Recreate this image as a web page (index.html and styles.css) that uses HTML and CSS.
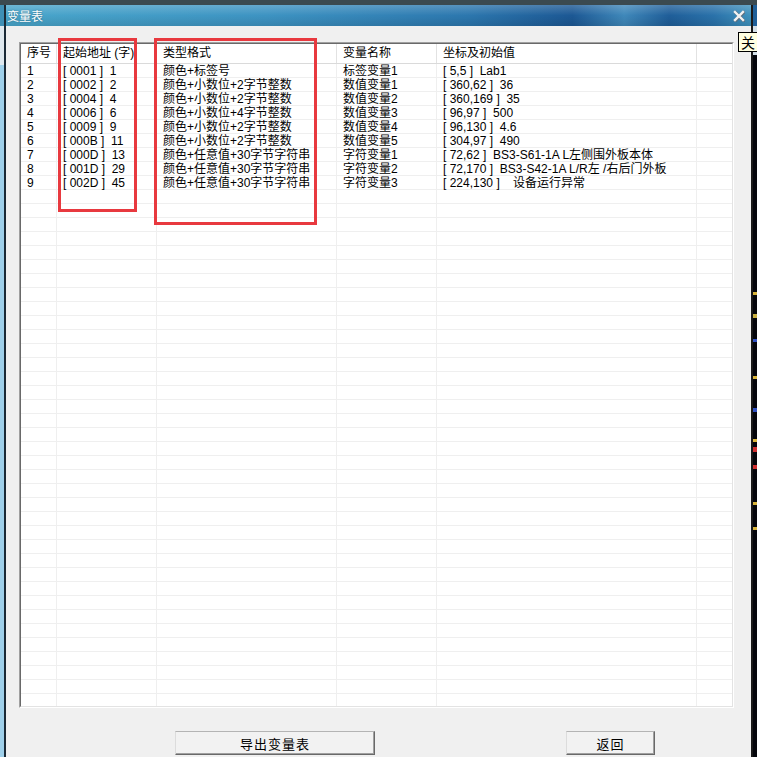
FILE: index.html
```html
<!DOCTYPE html>
<html lang="zh-CN">
<head>
  <meta charset="UTF-8" />
  <title>变量表</title>
  <link rel="stylesheet" href="styles.css">
</head>
<body>
  <div class="desk">
    <div class="side-left"></div>

    <div class="window">
      <div class="titlebar">
        <span class="title">变量表</span>
        <span class="close">
          <svg width="12" height="12" viewBox="0 0 12 12">
            <path d="M2 2 L10 10 M10 2 L2 10" stroke="#5a6f80" stroke-width="3.2" stroke-linecap="square" transform="translate(0.6,0.6)"/>
            <path d="M2 2 L10 10 M10 2 L2 10" stroke="#f2f2f2" stroke-width="2.4" stroke-linecap="square"/>
          </svg>
        </span>
      </div>

      <div class="client">
        <div class="list">
          <div class="grid">
            <div class="head">
              <div>序号</div>
              <div>起始地址 (字)</div>
              <div>类型格式</div>
              <div>变量名称</div>
              <div>坐标及初始值</div>
              <div></div>
            </div>
            <div class="rows">
              <div class="row"><span>1</span><span>[ 0001 ]  1</span><span>颜色+标签号</span><span>标签变量1</span><span>[ 5,5 ]  Lab1</span></div>
              <div class="row"><span>2</span><span>[ 0002 ]  2</span><span>颜色+小数位+2字节整数</span><span>数值变量1</span><span>[ 360,62 ]  36</span></div>
              <div class="row"><span>3</span><span>[ 0004 ]  4</span><span>颜色+小数位+2字节整数</span><span>数值变量2</span><span>[ 360,169 ]  35</span></div>
              <div class="row"><span>4</span><span>[ 0006 ]  6</span><span>颜色+小数位+4字节整数</span><span>数值变量3</span><span>[ 96,97 ]  500</span></div>
              <div class="row"><span>5</span><span>[ 0009 ]  9</span><span>颜色+小数位+2字节整数</span><span>数值变量4</span><span>[ 96,130 ]  4.6</span></div>
              <div class="row"><span>6</span><span>[ 000B ]  11</span><span>颜色+小数位+2字节整数</span><span>数值变量5</span><span>[ 304,97 ]  490</span></div>
              <div class="row"><span>7</span><span>[ 000D ]  13</span><span>颜色+任意值+30字节字符串</span><span>字符变量1</span><span>[ 72,62 ]  BS3-S61-1A L左侧围外板本体</span></div>
              <div class="row"><span>8</span><span>[ 001D ]  29</span><span>颜色+任意值+30字节字符串</span><span>字符变量2</span><span>[ 72,170 ]  BS3-S42-1A L/R左 /右后门外板</span></div>
              <div class="row"><span>9</span><span>[ 002D ]  45</span><span>颜色+任意值+30字节字符串</span><span>字符变量3</span><span>[ 224,130 ]    设备运行异常</span></div>
            </div>
          </div>
        </div>

        <div class="buttons">
          <button class="btn btn-export">导出变量表</button>
          <button class="btn btn-back">返回</button>
        </div>
      </div>
    </div>

    <div class="side-right"></div>

    <!-- annotation boxes drawn over the list -->
    <div class="mark mark-addr"></div>
    <div class="mark mark-type"></div>

    <div class="tooltip">关</div>
  </div>
</body>
</html>
```

FILE: styles.css
```css
body {
  margin: 0;
  width: 757px;
  height: 757px;
  overflow: hidden;
  background: #05060c;
  font-family: "Liberation Sans", "Noto Sans CJK SC", sans-serif;
  font-size: 12px;
  color: #000;
}

.desk {
  position: relative;
  display: flex;
  height: 757px;
  padding-top: 5px;
  box-sizing: border-box;
  background: linear-gradient(#3b4a50 0, #3b4a50 5px, #05060c 5px);
}

.side-left {
  width: 4px;
  background: linear-gradient(#3e8fb5 0, #3e8fb5 21px, #dfe8ee 21px, #dfe8ee 60px, #9fd0ea 60px);
}

.side-right {
  width: 4px;
  background: linear-gradient(#1f5f99 0, #1f5f99 21px, #d4e0e8 21px, #d4e0e8 50px, #05060c 50px,
    #05060c 287px, #d9b43a 287px, #d9b43a 290px, #05060c 290px,
    #05060c 309px, #c9b040 309px, #c9b040 313px, #05060c 313px,
    #05060c 334px, #3050c0 334px, #3050c0 337px, #05060c 337px,
    #05060c 371px, #d9b43a 371px, #d9b43a 374px, #05060c 374px,
    #05060c 403px, #3050c0 403px, #3050c0 407px, #05060c 407px,
    #05060c 434px, #d9b43a 434px, #d9b43a 437px, #05060c 437px,
    #05060c 442px, #d03030 442px, #d03030 447px, #05060c 447px,
    #05060c 460px, #d03030 460px, #d03030 464px, #05060c 464px,
    #05060c 497px, #d9b43a 497px, #d9b43a 500px, #05060c 500px,
    #05060c 522px, #d9b43a 522px, #d9b43a 525px, #05060c 525px);
}

.window {
  width: 745px;
  border-left: 2px solid #1b2a36;
  border-right: 2px solid #1a1a1a;
  display: flex;
  flex-direction: column;
}

.titlebar {
  height: 21px;
  display: flex;
  align-items: center;
  justify-content: space-between;
  padding: 0 6px 0 1px;
  background:
    linear-gradient(180deg, rgba(255,255,255,0.2) 0, rgba(255,255,255,0) 50%, rgba(0,0,0,0.1) 100%),
    linear-gradient(90deg, #49a6cb 0%, #3d93c2 35%, #2c77ae 62%, #1c5894 76%, #3f88ba 83%, #1f5e99 89%, #2a72aa 95%, #3f92bd 100%);
}

.title {
  color: #fff;
  font-family: "Noto Sans CJK SC", sans-serif;
  font-size: 12px;
  text-shadow: 0 0 2px rgba(0,0,0,0.35);
}

.close {
  display: flex;
  width: 12px;
  height: 12px;
}

.client {
  flex: 1;
  background: #f0f0f0;
  padding: 16px 17px 0 13px;
  display: flex;
  flex-direction: column;
}

.list {
  height: 666px;
  box-sizing: border-box;
  border: 1px solid;
  border-color: #a0a0a0 #fff #fff #a0a0a0;
}

.grid {
  height: 100%;
  box-sizing: border-box;
  border: 1px solid;
  border-color: #696969 #e3e3e3 #e3e3e3 #696969;
  background: #fff;
  display: flex;
  flex-direction: column;
}

.head,
.row {
  display: grid;
  grid-template-columns: 36px 100px 180px 100px 260px 1fr;
}

.head {
  height: 20px;
  box-sizing: border-box;
  border-bottom: 1px solid #dadada;
}

.head div {
  border-right: 1px solid #e2e2e2;
  padding-left: 6px;
  line-height: 19px;
  white-space: pre;
}

.head div:last-child {
  border-right: none;
}

.rows {
  flex: 1;
  background-color: #fff;
  background-image:
    linear-gradient(#efefef, #efefef),
    linear-gradient(#efefef, #efefef),
    linear-gradient(#efefef, #efefef),
    linear-gradient(#efefef, #efefef),
    linear-gradient(#efefef, #efefef),
    repeating-linear-gradient(to bottom, transparent 0, transparent 13px, #efefef 13px, #efefef 14px);
  background-size: 1px 100%, 1px 100%, 1px 100%, 1px 100%, 1px 100%, 100% 100%;
  background-position: 35px 0, 135px 0, 315px 0, 415px 0, 675px 0, 0 0;
  background-repeat: no-repeat;
}

.row {
  height: 14px;
  line-height: 14px;
  white-space: pre;
}

.row span {
  padding-left: 6px;
  overflow: hidden;
}

.buttons {
  display: flex;
  gap: 191px;
  padding-left: 156px;
  margin-top: 23px;
}

.btn {
  height: 24px;
  padding: 0;
  font-family: "Noto Sans CJK SC", sans-serif;
  font-size: 13px;
  letter-spacing: 1px;
  color: #000;
  background: #f2f2f2;
  border: 1px solid;
  border-color: #b4b4b4 #696969 #696969 #dcdcdc;
  box-shadow: inset -1px -1px #a0a0a0;
}

.btn-export {
  width: 200px;
}

.btn-back {
  width: 89px;
}

.mark {
  position: absolute;
  box-sizing: border-box;
  border: 3px solid #e8393f;
}

.mark-addr {
  left: 58px;
  top: 38px;
  width: 79px;
  height: 174px;
}

.mark-type {
  left: 154px;
  top: 38px;
  width: 163px;
  height: 187px;
}

.tooltip {
  position: absolute;
  left: 738px;
  top: 32px;
  width: 24px;
  height: 20px;
  box-sizing: border-box;
  border: 1px solid #000;
  background: #ffffe1;
  font-family: "Noto Sans CJK SC", sans-serif;
  font-size: 14px;
  line-height: 18px;
  padding-left: 2px;
}
```
